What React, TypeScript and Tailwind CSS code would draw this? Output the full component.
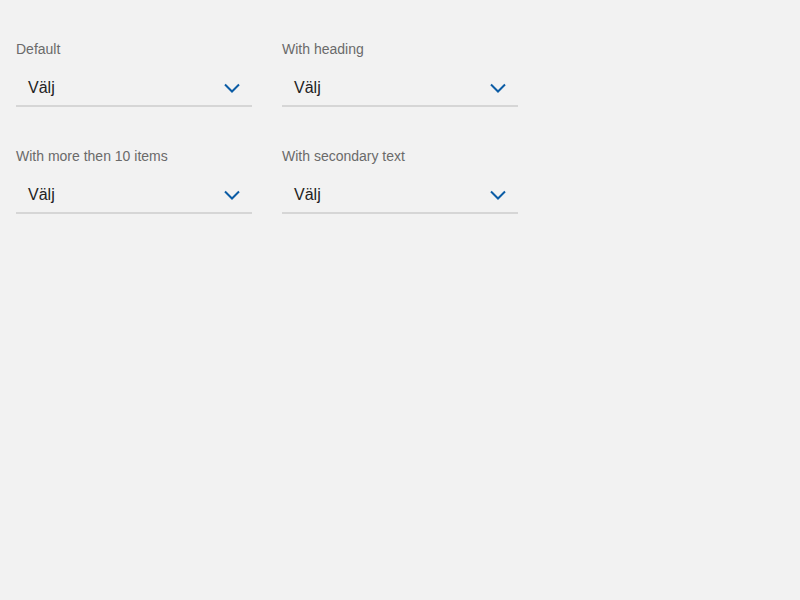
import React from "react"

const selects = ["Default", "With heading", "With more then 10 items", "With secondary text"]

function Chevron() {
  return (
    <svg width="16" height="10" viewBox="0 0 16 10" fill="none" aria-hidden="true">
      <polyline points="1,1.5 8,8.5 15,1.5" stroke="#0b5ca5" strokeWidth="2" />
    </svg>
  )
}

function Select({ label }: { label: string }) {
  return (
    <div className="flex flex-col">
      <div className="text-[14px] leading-5 text-[#6a6a6a]">{label}</div>
      <button className="mt-2 flex h-10 w-[236px] items-center justify-between border-b-2 border-[#d6d6d6] pl-3 pr-3 pt-[4px] text-left">
        <span className="text-[16px] text-[#222]">Välj</span>
        <Chevron />
      </button>
    </div>
  )
}

export default function App() {
  return (
    <div className="min-h-[600px] w-full bg-[#f2f2f2] pl-4 pt-[39px] font-['Liberation_Sans',Arial,sans-serif]">
      <div className="grid w-max grid-cols-[236px_236px] gap-x-[30px] gap-y-[39px]">
        {selects.map((s, i) => (
          <Select key={i} label={s} />
        ))}
      </div>
    </div>
  )
}
